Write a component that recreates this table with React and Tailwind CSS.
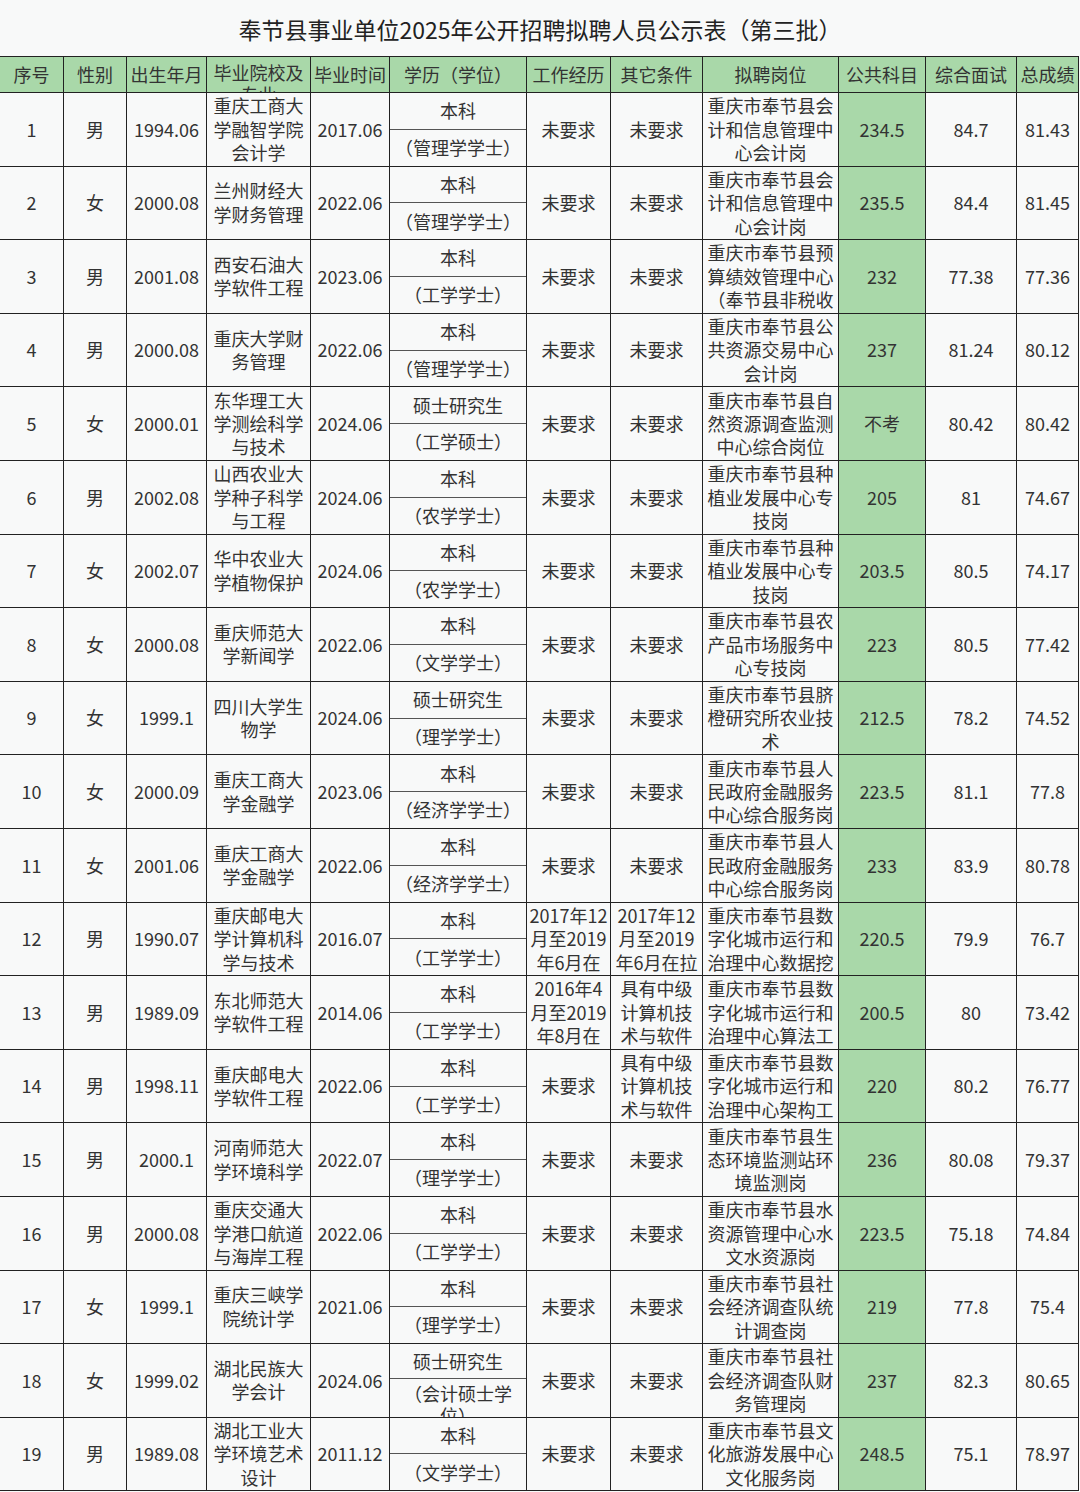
import React from "react";

const cols =
  "grid grid-cols-[64px_63px_80px_104px_79px_137px_84px_92px_136px_87px_91px_61px]";

const heads = [
  "序号",
  "性别",
  "出生年月",
  ["毕业院校及", "专业"],
  "毕业时间",
  "学历（学位）",
  "工作经历",
  "其它条件",
  "拟聘岗位",
  "公共科目",
  "综合面试",
  "总成绩",
];

const N = "未要求";

// no, sex, birth, school, grad, degree, title, work, other, post, exam, interview, total
const rows = [
  [1, "男", "1994.06", ["重庆工商大", "学融智学院", "会计学"], "2017.06", "本科", "（管理学学士）", N, N, ["重庆市奉节县会", "计和信息管理中", "心会计岗"], "234.5", "84.7", "81.43"],
  [2, "女", "2000.08", ["兰州财经大", "学财务管理"], "2022.06", "本科", "（管理学学士）", N, N, ["重庆市奉节县会", "计和信息管理中", "心会计岗"], "235.5", "84.4", "81.45"],
  [3, "男", "2001.08", ["西安石油大", "学软件工程"], "2023.06", "本科", "（工学学士）", N, N, ["重庆市奉节县预", "算绩效管理中心", "（奉节县非税收"], "232", "77.38", "77.36"],
  [4, "男", "2000.08", ["重庆大学财", "务管理"], "2022.06", "本科", "（管理学学士）", N, N, ["重庆市奉节县公", "共资源交易中心", "会计岗"], "237", "81.24", "80.12"],
  [5, "女", "2000.01", ["东华理工大", "学测绘科学", "与技术"], "2024.06", "硕士研究生", "（工学硕士）", N, N, ["重庆市奉节县自", "然资源调查监测", "中心综合岗位"], "不考", "80.42", "80.42"],
  [6, "男", "2002.08", ["山西农业大", "学种子科学", "与工程"], "2024.06", "本科", "（农学学士）", N, N, ["重庆市奉节县种", "植业发展中心专", "技岗"], "205", "81", "74.67"],
  [7, "女", "2002.07", ["华中农业大", "学植物保护"], "2024.06", "本科", "（农学学士）", N, N, ["重庆市奉节县种", "植业发展中心专", "技岗"], "203.5", "80.5", "74.17"],
  [8, "女", "2000.08", ["重庆师范大", "学新闻学"], "2022.06", "本科", "（文学学士）", N, N, ["重庆市奉节县农", "产品市场服务中", "心专技岗"], "223", "80.5", "77.42"],
  [9, "女", "1999.1", ["四川大学生", "物学"], "2024.06", "硕士研究生", "（理学学士）", N, N, ["重庆市奉节县脐", "橙研究所农业技", "术"], "212.5", "78.2", "74.52"],
  [10, "女", "2000.09", ["重庆工商大", "学金融学"], "2023.06", "本科", "（经济学学士）", N, N, ["重庆市奉节县人", "民政府金融服务", "中心综合服务岗"], "223.5", "81.1", "77.8"],
  [11, "女", "2001.06", ["重庆工商大", "学金融学"], "2022.06", "本科", "（经济学学士）", N, N, ["重庆市奉节县人", "民政府金融服务", "中心综合服务岗"], "233", "83.9", "80.78"],
  [12, "男", "1990.07", ["重庆邮电大", "学计算机科", "学与技术"], "2016.07", "本科", "（工学学士）", ["2017年12", "月至2019", "年6月在"], ["2017年12", "月至2019", "年6月在拉"], ["重庆市奉节县数", "字化城市运行和", "治理中心数据挖"], "220.5", "79.9", "76.7"],
  [13, "男", "1989.09", ["东北师范大", "学软件工程"], "2014.06", "本科", "（工学学士）", ["2016年4", "月至2019", "年8月在"], ["具有中级", "计算机技", "术与软件"], ["重庆市奉节县数", "字化城市运行和", "治理中心算法工"], "200.5", "80", "73.42"],
  [14, "男", "1998.11", ["重庆邮电大", "学软件工程"], "2022.06", "本科", "（工学学士）", N, ["具有中级", "计算机技", "术与软件"], ["重庆市奉节县数", "字化城市运行和", "治理中心架构工"], "220", "80.2", "76.77"],
  [15, "男", "2000.1", ["河南师范大", "学环境科学"], "2022.07", "本科", "（理学学士）", N, N, ["重庆市奉节县生", "态环境监测站环", "境监测岗"], "236", "80.08", "79.37"],
  [16, "男", "2000.08", ["重庆交通大", "学港口航道", "与海岸工程"], "2022.06", "本科", "（工学学士）", N, N, ["重庆市奉节县水", "资源管理中心水", "文水资源岗"], "223.5", "75.18", "74.84"],
  [17, "女", "1999.1", ["重庆三峡学", "院统计学"], "2021.06", "本科", "（理学学士）", N, N, ["重庆市奉节县社", "会经济调查队统", "计调查岗"], "219", "77.8", "75.4"],
  [18, "女", "1999.02", ["湖北民族大", "学会计"], "2024.06", "硕士研究生", ["（会计硕士学", "位）"], N, N, ["重庆市奉节县社", "会经济调查队财", "务管理岗"], "237", "82.3", "80.65"],
  [19, "男", "1989.08", ["湖北工业大", "学环境艺术", "设计"], "2011.12", "本科", "（文学学士）", N, N, ["重庆市奉节县文", "化旅游发展中心", "文化服务岗"], "248.5", "75.1", "78.97"],
];

const Lines = ({ v }) =>
  Array.isArray(v) ? (
    v.map((l, i) => (
      <div key={i} className="whitespace-nowrap">
        {l}
      </div>
    ))
  ) : (
    <div className="whitespace-nowrap">{v}</div>
  );

const Cell = ({ v, green, last }) => (
  <div
    className={`flex flex-col items-center justify-center overflow-hidden text-center border-b border-[#222] ${
      last ? "" : "border-r"
    } ${green ? "bg-[#a9d8a9]" : ""}`}
  >
    <Lines v={v} />
  </div>
);

export default function App() {
  return (
    <div
      className="w-[1080px] h-[1492px] overflow-hidden bg-[#f8f9f9] text-[#333] text-[18px] leading-[23.4px]"
      style={{ fontFamily: '"Noto Sans CJK SC", "Liberation Sans", sans-serif' }}
    >
      <div className="h-[56px] flex items-center justify-center text-[23px] text-[#222] pt-[4px]">
        奉节县事业单位2025年公开招聘拟聘人员公示表（第三批）
      </div>
      <div className="w-[1079px] border-r border-[#222]">
        {/* header */}
        <div className={`${cols} h-[37px] bg-[#a9d8a9] border-t border-[#222]`}>
          {heads.map((h, i) =>
            Array.isArray(h) ? (
              <div
                key={i}
                className="flex flex-col items-center justify-start pt-[4px] overflow-hidden border-r border-b border-[#222] leading-[22px]"
              >
                <Lines v={h} />
              </div>
            ) : (
              <Cell key={i} v={h} last={i === heads.length - 1} />
            )
          )}
        </div>
        {rows.map((r) => (
          <div key={r[0]} className={`${cols} h-[73.6px]`}>
            <Cell v={r[0]} />
            <Cell v={r[1]} />
            <Cell v={r[2]} />
            <Cell v={r[3]} />
            <Cell v={r[4]} />
            <div className="flex flex-col border-r border-b border-[#222]">
              <div className="flex-1 flex items-center justify-center border-b border-[#555]">
                {r[5]}
              </div>
              {Array.isArray(r[6]) ? (
                <div className="flex-1 flex flex-col items-center justify-start pt-[3px] overflow-hidden leading-[22px]">
                  <Lines v={r[6]} />
                </div>
              ) : (
                <div className="flex-1 flex items-center justify-center overflow-hidden whitespace-nowrap">
                  {r[6]}
                </div>
              )}
            </div>
            <Cell v={r[7]} />
            <Cell v={r[8]} />
            <Cell v={r[9]} />
            <Cell v={r[10]} green />
            <Cell v={r[11]} />
            <Cell v={r[12]} last />
          </div>
        ))}
      </div>
    </div>
  );
}
